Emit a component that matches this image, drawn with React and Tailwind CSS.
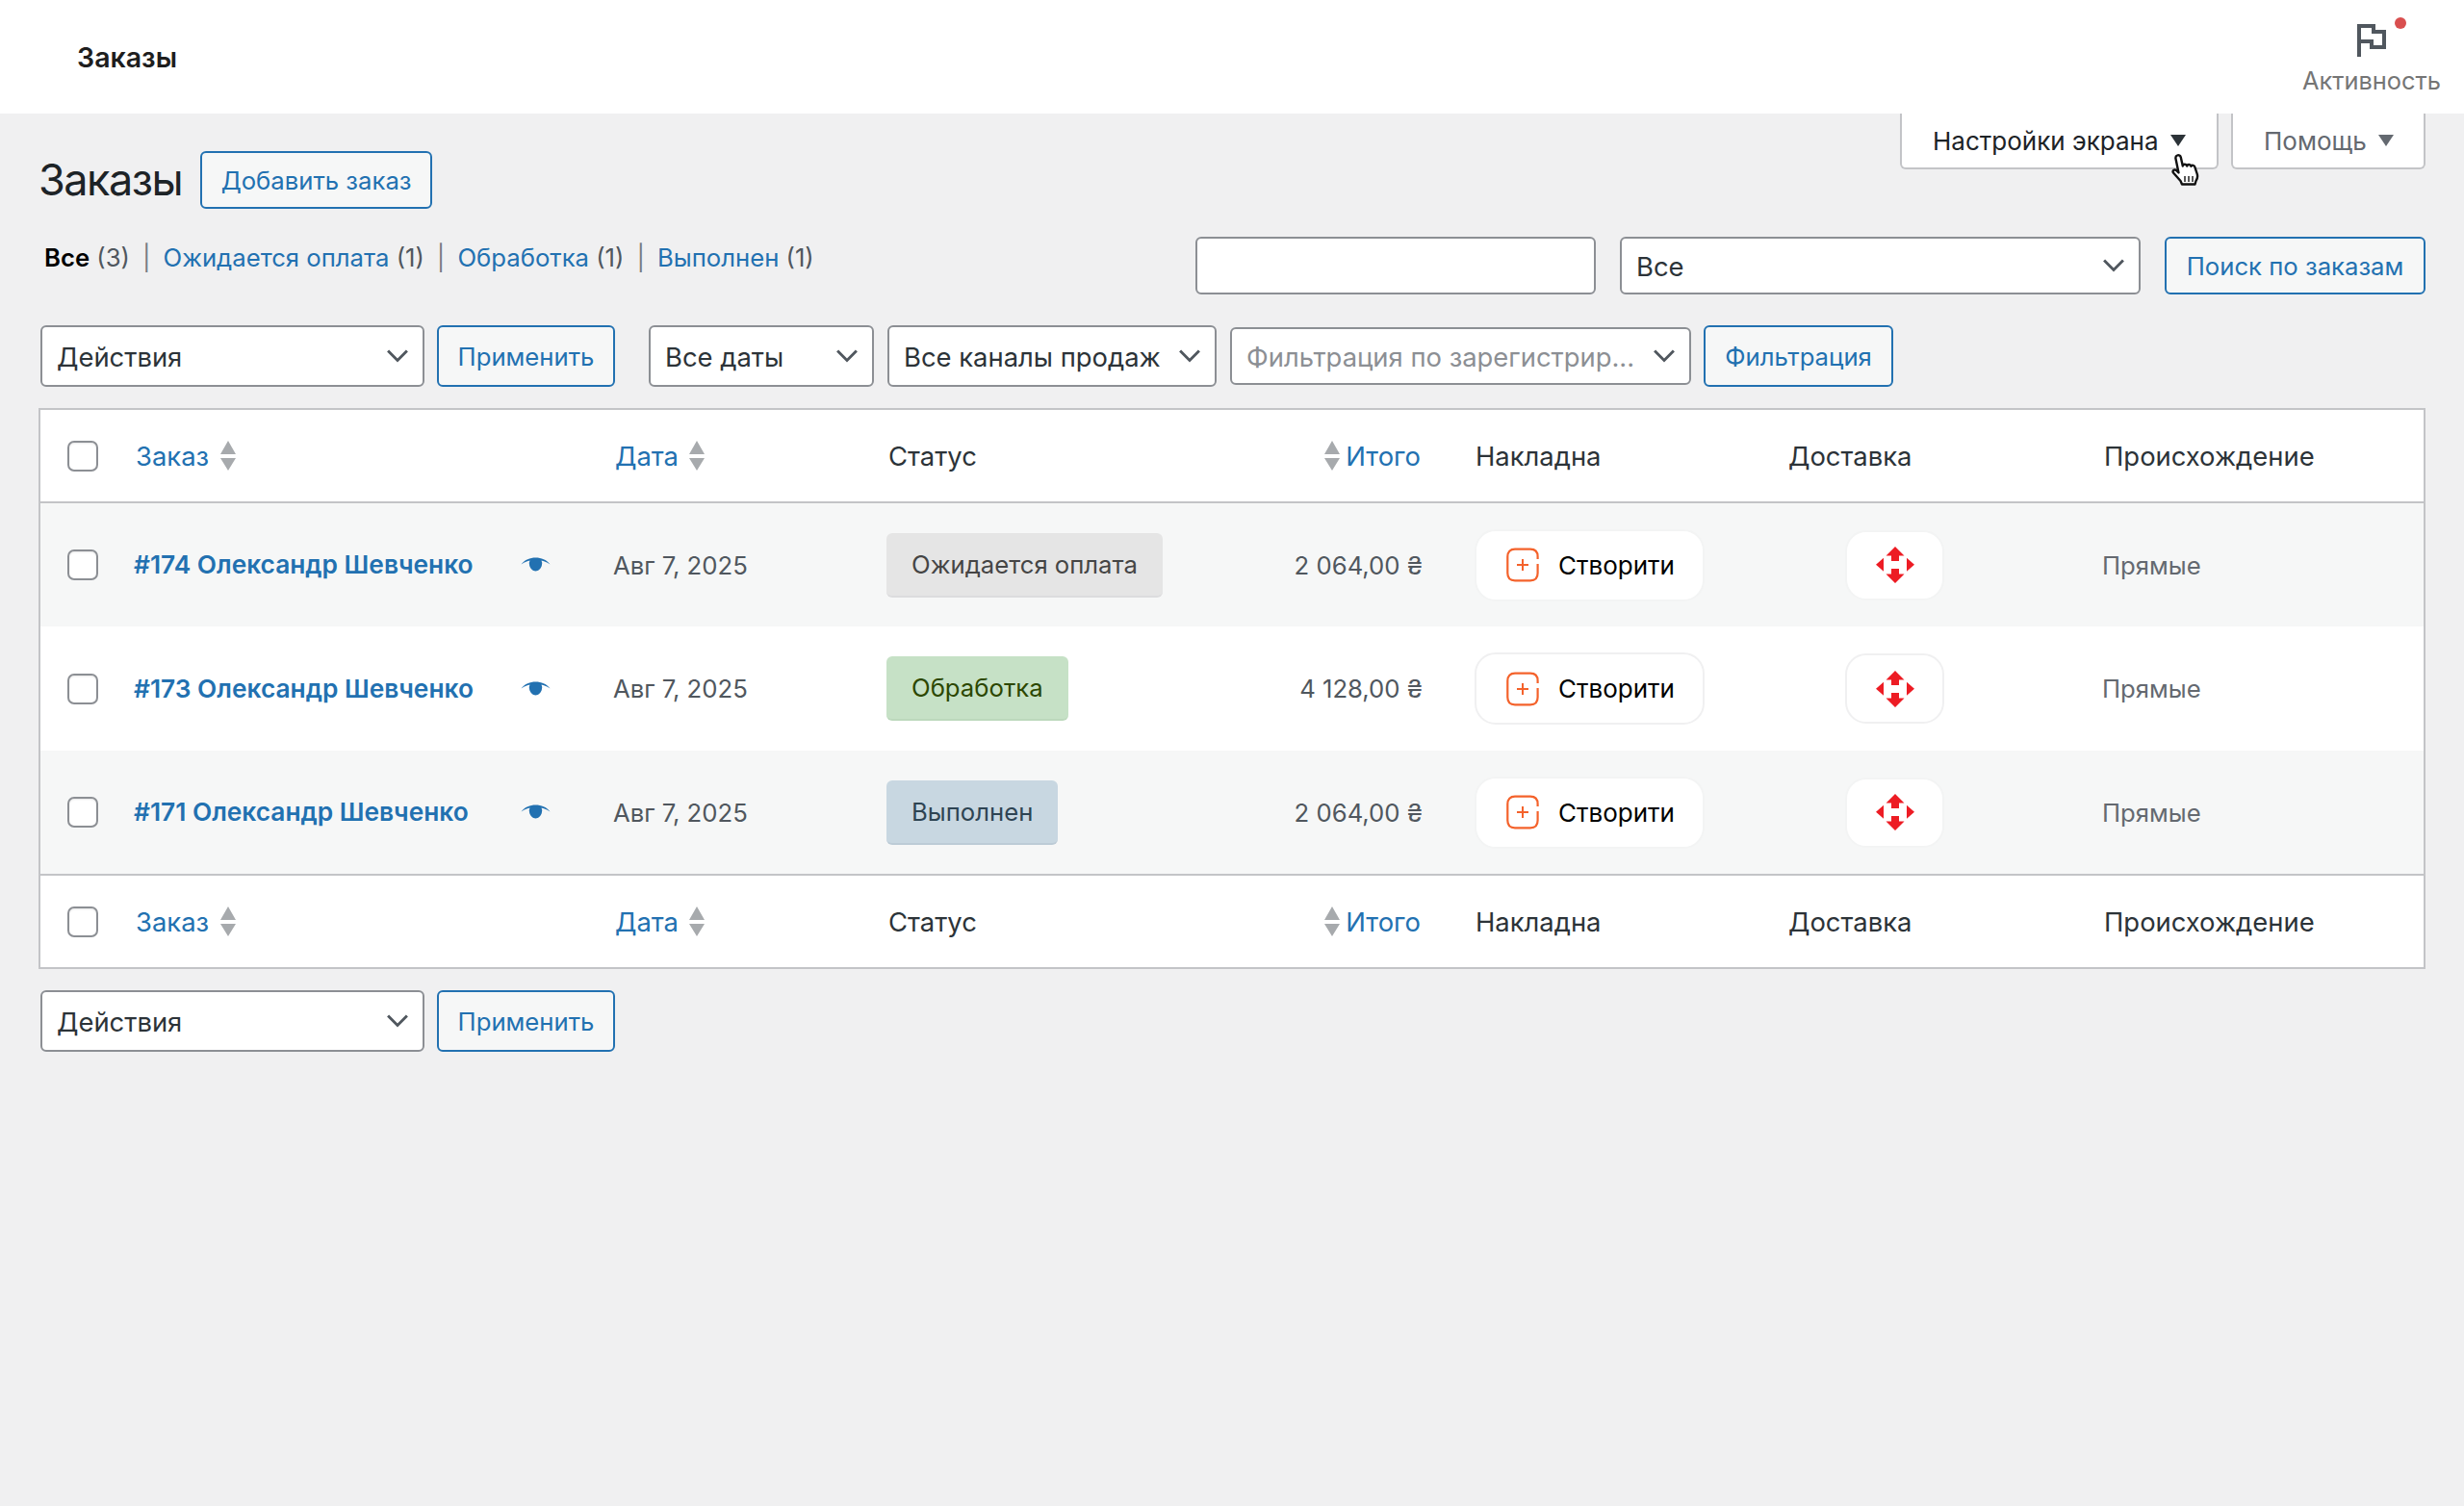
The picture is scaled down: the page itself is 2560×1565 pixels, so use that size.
import { Fragment } from 'react'

const FONT = "font-['Inter',sans-serif]"

function Chevron() {
  return (
    <svg viewBox="0 0 20 20" className="w-[36px] h-[36px] absolute right-[8px] top-1/2 -translate-y-1/2 pointer-events-none" fill="none" stroke="#50575e" strokeWidth="1.600">
      <path d="M4.500 7 10 12.500 15.500 7" />
    </svg>
  )
}

function Select({ label, width, muted, h = 'h-[64px]' }) {
  return (
    <div className={`relative ${h} ${width} shrink-0 bg-white border-2 border-[#8c8f94] rounded-[6px] flex items-center pl-[15px] pt-[3px] text-[27.400px] ${muted ? 'text-[#8c8f94]' : 'text-[#2c3338]'} whitespace-nowrap overflow-hidden`}>
      {label}
      <Chevron />
    </div>
  )
}

function Btn({ children, width, h = 'h-[64px]' }) {
  return (
    <button className={`${h} ${width} shrink-0 bg-[#f6f7f7] border-2 border-[#2271b1] rounded-[6px] pt-[2px] text-[25.700px] text-[#2271b1] flex items-center justify-center whitespace-nowrap`}>
      {children}
    </button>
  )
}

function Checkbox() {
  return <span className="block w-[32px] h-[32px] bg-white border-2 border-[#8c8f94] rounded-[7px] shadow-[inset_0_1px_2px_rgba(0,0,0,0.1)]" />
}

function SortArrows() {
  return (
    <svg viewBox="0 0 16 31" className="w-[16px] h-[31px] shrink-0" fill="#a7aaad">
      <path d="M8 0l8 14H0zM0 18h16L8 31z" />
    </svg>
  )
}

function Eye() {
  return (
    <svg viewBox="0 0 30 16" className="w-[31px] h-[16px]" fill="#2271b1">
      <path d="M0 7.500C4 2.500 9 .5 15 .5s11 2 15 7c-4-2.600-6.600-3.600-9-4a6.400 6.400 0 0 1 .3 5.600c-.9 3-3.300 5.400-6.300 5.400s-5.400-2.400-6.300-5.400A6.400 6.400 0 0 1 9 3.500C6.600 3.900 4 4.900 0 7.500z" />
    </svg>
  )
}

function PlusBox() {
  return (
    <svg viewBox="0 0 36 36" className="w-[36px] h-[36px] shrink-0" fill="none" stroke="#f4622b" strokeWidth="2.200">
      <path d="M33.600 12V9.500C33.600 4.500 31 1.700 26 1.700H10C5 1.700 2.300 4.500 2.300 9.500v17c0 5 2.700 7.800 7.700 7.800h16c5 0 7.600-2.800 7.600-7.800V17" />
      <path d="M18 12v12M12 18h12" strokeWidth="2" />
    </svg>
  )
}

function NovaPoshta() {
  return (
    <svg viewBox="0 0 40 38" className="w-[40px] h-[38px]" fill="#ed1c24">
      <path d="M20 0l9.500 9.500H24V15h-8V9.500h-5.500zM20 38l-9.500-9.500H16V23h8v5.500h5.500zM0 18.700l8-7v14zM40 18.700l-8-7v14z" />
    </svg>
  )
}

function Cursor() {
  return (
    <svg viewBox="0 0 30 36" className="absolute left-[-47px] top-[41px] w-[30px] h-[36px]" fill="#fff" stroke="#111" strokeWidth="2.400" strokeLinejoin="round">
      <path d="M6 2.500c1.800-.8 3.400.2 3.800 2l2 9c.2-2.200 3.800-2.500 4.400 0 .4-2 3.600-2 4.200.3.800-1.600 3.600-1.200 4 .8l2.400 7.400c.6 2.400.2 5-1.300 7l-1 3.500H11l-1.500-3.500L2 20.500c-1.300-2 1-4 3-2.500l2.500 2.500L4.500 6c-.3-1.500.3-3 1.500-3.500z" />
      <path d="M14 24v6M18 24v6M22 24v6" strokeWidth="1.400" fill="none" />
    </svg>
  )
}

const ORDERS = [
  { name: '#174 Олександр Шевченко', status: 'Ожидается оплата', chip: 'bg-[#e5e5e5] text-[#454545] border-[#dcdcde]', total: '2 064,00 ₴', bg: 'bg-[#f6f7f7]', plain: false },
  { name: '#173 Олександр Шевченко', status: 'Обработка', chip: 'bg-[#c6e1c6] text-[#2c4700] border-[#bcd8bc]', total: '4 128,00 ₴', bg: 'bg-white', plain: true },
  { name: '#171 Олександр Шевченко', status: 'Выполнен', chip: 'bg-[#c8d7e1] text-[#2e4453] border-[#bccbd6]', total: '2 064,00 ₴', bg: 'bg-[#f6f7f7]', plain: false },
]

function HeadRow({ border }) {
  return (
    <tr className={`h-[96px] text-[27.400px] text-[#2c3338] ${border}`}>
      <td className="pl-[28px]"><Checkbox /></td>
      <td className="pl-[18px]">
        <span className="flex items-center gap-[12px] text-[#2271b1]"><span className="pt-[2px]">Заказ</span> <SortArrows /></span>
      </td>
      <td className="pl-[17px]">
        <span className="flex items-center gap-[11px] text-[#2271b1]"><span className="pt-[2px]">Дата</span> <SortArrows /></span>
      </td>
      <td className="pl-[18px] pt-[2px]">Статус</td>
      <td className="pr-[18px]">
        <span className="flex items-center justify-end gap-[6px] text-[#2271b1]"><SortArrows /> <span className="pt-[2px]">Итого</span></span>
      </td>
      <td className="pl-[39px] pt-[2px]">Накладна</td>
      <td className="pl-[15px] pt-[2px]">Доставка</td>
      <td className="pl-[16px] pt-[2px]">Происхождение</td>
    </tr>
  )
}

function BulkActions() {
  return (
    <Fragment>
      <Select label="Действия" width="w-[399px]" />
      <div className="-ml-[1px]"><Btn width="w-[185px]">Применить</Btn></div>
    </Fragment>
  )
}

export default function App() {
  return (
    <div className={`min-h-screen bg-[#f0f0f1] ${FONT}`}>
      <header className="h-[118px] bg-white flex justify-between relative z-10">
        <div className="pl-[80px] pt-[2px] flex items-center text-[28.500px] font-semibold text-[#1e1e1e]">Заказы</div>
        <div className="pr-[24px] flex flex-col items-center pt-[25px]">
          <div className="relative h-[34px]">
            <svg viewBox="0 0 30 34" className="w-[30px] h-[34px]" fill="none" stroke="#50575e" strokeWidth="4">
              <path d="M2 34V2h15v6h11v16H15v-6H2" />
            </svg>
            <span className="absolute left-[39px] top-[-7px] w-[12px] h-[12px] rounded-full bg-[#d94f4f]" />
          </div>
          <div className="mt-[9px] text-[25.400px] text-[#757575] leading-[32px]">Активность</div>
        </div>
      </header>

      <main className="px-[40px]">
        <div className="flex justify-between items-start">
          <div className="pt-[39px] flex items-center gap-[19px]">
            <h1 className="text-[45px] text-[#1d2327] leading-[60px] tracking-[-1.500px]">Заказы</h1>
            <Btn width="w-[241px]" h="h-[60px]">Добавить заказ</Btn>
          </div>
          <div className="flex gap-[13px]">
            <div className="relative h-[58px] w-[331px] bg-white border-2 border-t-0 border-[#c3c4c7] rounded-b-[6px] flex items-center pl-[32px] text-[26px] text-[#1d2327]">
              Настройки экрана
              <svg viewBox="0 0 16 12" className="w-[16px] h-[12px] ml-[12px]" fill="#2c3338"><path d="M0 0h16L8 12z" /></svg>
              <span className="absolute right-0 top-0 w-0 h-0"><Cursor /></span>
            </div>
            <div className="h-[58px] w-[202px] bg-white border-2 border-t-0 border-[#c3c4c7] rounded-b-[6px] flex items-center pl-[32px] text-[26px] text-[#646970]">
              Помощь
              <svg viewBox="0 0 16 12" className="w-[16px] h-[12px] ml-[12px]" fill="#646970"><path d="M0 0h16L8 12z" /></svg>
            </div>
          </div>
        </div>

        <div className="mt-[29px] flex justify-between items-start h-[60px]">
          <div className="pl-[6px] pt-[1px] text-[25.700px] text-[#50575e] flex gap-[13px] leading-[42px]">
            <span><b className="text-black font-semibold">Все</b> (3)</span><span className="text-[#787c82]">|</span>
            <span><span className="text-[#2271b1]">Ожидается оплата</span> (1)</span><span className="text-[#787c82]">|</span>
            <span><span className="text-[#2271b1]">Обработка</span> (1)</span><span className="text-[#787c82]">|</span>
            <span><span className="text-[#2271b1]">Выполнен</span> (1)</span>
          </div>
          <div className="flex">
            <div className="w-[416px] h-[60px] bg-white border-2 border-[#8c8f94] rounded-[6px]" />
            <div className="ml-[25px]"><Select label="Все" width="w-[541px]" h="h-[60px]" /></div>
            <div className="ml-[25px]"><Btn width="w-[271px]" h="h-[60px]">Поиск по заказам</Btn></div>
          </div>
        </div>

        <div className="mt-[32px] flex items-center pl-[2px] gap-[14px]">
          <BulkActions />
          <div className="ml-[21px]"><Select label="Все даты" width="w-[234px]" /></div>
          <Select label="Все каналы продаж" width="w-[342px]" />
          <Select label="Фильтрация по зарегистрир..." width="w-[479px]" h="h-[60px]" muted />
          <div className="-ml-[1px]"><Btn width="w-[197px]">Фильтрация</Btn></div>
        </div>

        <div className="mt-[22px] bg-white border-2 border-[#c3c4c7]">
          <table className="w-full table-fixed border-collapse">
            <colgroup>
              <col className="w-[81px]" /><col className="w-[499px]" /><col className="w-[283px]" /><col className="w-[295px]" />
              <col className="w-[294px]" /><col className="w-[349px]" /><col className="w-[327px]" /><col className="w-[348px]" />
            </colgroup>
            <thead><HeadRow border="border-b-2 border-[#c3c4c7]" /></thead>
            <tbody>
              {ORDERS.map((o) => (
                <tr key={o.name} className={`h-[129px] ${o.bg} text-[25.700px]`}>
                  <td className="pl-[28px]"><Checkbox /></td>
                  <td className="pl-[16px]">
                    <div className="flex items-center justify-between pr-[50px]">
                      <span className="text-[26.300px] font-semibold text-[#2271b1] whitespace-nowrap">{o.name}</span>
                      <Eye />
                    </div>
                  </td>
                  <td className="pl-[15px] pt-[2px] text-[#50575e]">Авг 7, 2025</td>
                  <td className="pl-[16px]">
                    <span className={`inline-flex items-center h-[67px] pt-[2px] px-[26px] rounded-[6px] border-b-2 whitespace-nowrap ${o.chip}`}>{o.status}</span>
                  </td>
                  <td className="pr-[16px] pt-[2px] text-right text-[#50575e] whitespace-nowrap">{o.total}</td>
                  <td className="pl-[38px]">
                    <div className={`w-[239px] h-[75px] bg-white border-2 rounded-[22px] flex items-center pl-[30px] gap-[19px] text-[26px] text-black ${o.plain ? 'border-[#f0f0f1]' : 'border-[#f3f4f4]'}`}>
                      <PlusBox />
                      Створити
                    </div>
                  </td>
                  <td className="pl-[74px]">
                    <div className={`w-[103px] h-[73px] bg-white border-2 rounded-[22px] flex items-center justify-center ${o.plain ? 'border-[#f0f0f1]' : 'border-[#f3f4f4]'}`}>
                      <NovaPoshta />
                    </div>
                  </td>
                  <td className="pl-[14px] pt-[2px] text-[#646970]">Прямые</td>
                </tr>
              ))}
            </tbody>
            <tfoot><HeadRow border="border-t-2 border-[#c3c4c7]" /></tfoot>
          </table>
        </div>

        <div className="mt-[22px] flex items-center pl-[2px] gap-[14px]">
          <BulkActions />
        </div>
      </main>
    </div>
  )
}
